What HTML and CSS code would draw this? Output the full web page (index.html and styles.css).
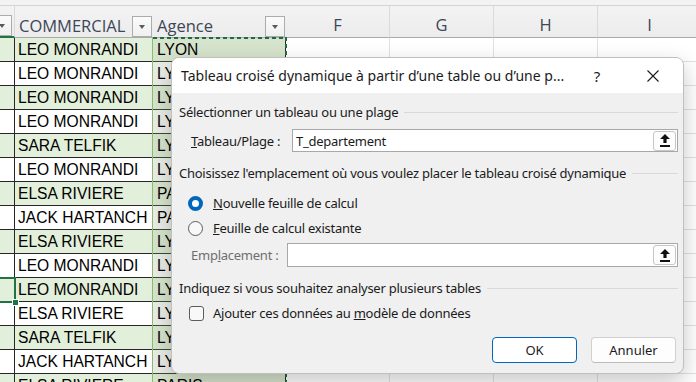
FILE: index.html
```
<!DOCTYPE html>
<html lang="fr">
<head>
    <meta charset="UTF-8">
    <title>Tableau croisé dynamique</title>
    <link rel="stylesheet" href="styles.css">
</head>
<body>
    <div class="topbar"></div>

    <div class="sheet">
        <!-- en-tetes -->
        <div class="hcell hcell-active"><span class="drop drop-cut"></span></div>
        <div class="hcell hcell-table">COMMERCIAL<span class="drop"></span></div>
        <div class="hcell hcell-table">Agence<span class="drop"></span></div>
        <div class="hcell hcell-letter">F</div>
        <div class="hcell hcell-letter">G</div>
        <div class="hcell hcell-letter">H</div>
        <div class="hcell hcell-letter">I</div>

        <div class="cell band"></div><div class="cell band">LEO MONRANDI</div><div class="cell sel band">LYON</div><div class="cell grid"></div><div class="cell grid"></div><div class="cell grid"></div><div class="cell grid"></div>
        <div class="cell"></div><div class="cell">LEO MONRANDI</div><div class="cell sel">LYON</div><div class="cell grid"></div><div class="cell grid"></div><div class="cell grid"></div><div class="cell grid"></div>
        <div class="cell band"></div><div class="cell band">LEO MONRANDI</div><div class="cell sel band">LYON</div><div class="cell grid"></div><div class="cell grid"></div><div class="cell grid"></div><div class="cell grid"></div>
        <div class="cell"></div><div class="cell">LEO MONRANDI</div><div class="cell sel">LYON</div><div class="cell grid"></div><div class="cell grid"></div><div class="cell grid"></div><div class="cell grid"></div>
        <div class="cell band"></div><div class="cell band">SARA TELFIK</div><div class="cell sel band">LYON</div><div class="cell grid"></div><div class="cell grid"></div><div class="cell grid"></div><div class="cell grid"></div>
        <div class="cell"></div><div class="cell">LEO MONRANDI</div><div class="cell sel">LYON</div><div class="cell grid"></div><div class="cell grid"></div><div class="cell grid"></div><div class="cell grid"></div>
        <div class="cell band"></div><div class="cell band">ELSA RIVIERE</div><div class="cell sel band">PARIS</div><div class="cell grid"></div><div class="cell grid"></div><div class="cell grid"></div><div class="cell grid"></div>
        <div class="cell"></div><div class="cell">JACK HARTANCH</div><div class="cell sel">PARIS</div><div class="cell grid"></div><div class="cell grid"></div><div class="cell grid"></div><div class="cell grid"></div>
        <div class="cell band"></div><div class="cell band">ELSA RIVIERE</div><div class="cell sel band">LYON</div><div class="cell grid"></div><div class="cell grid"></div><div class="cell grid"></div><div class="cell grid"></div>
        <div class="cell"></div><div class="cell">LEO MONRANDI</div><div class="cell sel">LYON</div><div class="cell grid"></div><div class="cell grid"></div><div class="cell grid"></div><div class="cell grid"></div>
        <div class="cell band"></div><div class="cell band">LEO MONRANDI</div><div class="cell sel band">LYON</div><div class="cell grid"></div><div class="cell grid"></div><div class="cell grid"></div><div class="cell grid"></div>
        <div class="cell"></div><div class="cell">ELSA RIVIERE</div><div class="cell sel">LYON</div><div class="cell grid"></div><div class="cell grid"></div><div class="cell grid"></div><div class="cell grid"></div>
        <div class="cell band"></div><div class="cell band">SARA TELFIK</div><div class="cell sel band">LYON</div><div class="cell grid"></div><div class="cell grid"></div><div class="cell grid"></div><div class="cell grid"></div>
        <div class="cell"></div><div class="cell">JACK HARTANCH</div><div class="cell sel">LYON</div><div class="cell grid"></div><div class="cell grid"></div><div class="cell grid"></div><div class="cell grid"></div>
        <div class="cell band"></div><div class="cell band">ELSA RIVIERE</div><div class="cell sel band">PARIS</div><div class="cell grid"></div><div class="cell grid"></div><div class="cell grid"></div><div class="cell grid"></div>
    </div>

    <!-- selection et cellule active -->
    <div class="marquee"></div>
    <div class="active-cell"><span class="fill-handle"></span></div>

    <div class="dialog">
        <div class="dlg-title">
            <span class="dlg-caption">Tableau croisé dynamique à partir d’une table ou d’une p...</span>
            <span class="dlg-help">?</span>
            <span class="dlg-close">
                <svg width="12" height="12" viewBox="0 0 12 12"><path d="M0.5 0.5 L11.5 11.5 M11.5 0.5 L0.5 11.5" stroke="#1b1b1b" stroke-width="1.1" fill="none"/></svg>
            </span>
        </div>
        <div class="dlg-body">
            <div class="legend legend-first">Sélectionner un tableau ou une plage</div>
            <div class="field field-range">
                <span class="field-label"><u>T</u>ableau/Plage :</span>
                <div class="ref-box">
                    <span class="ref-value">T_departement</span>
                    <span class="ref-btn">
                        <svg width="10" height="13" viewBox="0 0 10 13"><path d="M5 0 L10 5 L6.6 5 L6.6 9 L3.4 9 L3.4 5 L0 5 Z" fill="#111"/><rect x="0" y="11" width="10" height="2" fill="#111"/></svg>
                    </span>
                </div>
            </div>

            <div class="legend">Choisissez l'emplacement où vous voulez placer le tableau croisé dynamique</div>
            <div class="option option-first"><span class="radio radio-on"></span><span><u>N</u>ouvelle feuille de calcul</span></div>
            <div class="option"><span class="radio"></span><span><u>F</u>euille de calcul existante</span></div>
            <div class="field field-dest">
                <span class="field-label field-label-off">Emp<u>l</u>acement :</span>
                <div class="ref-box">
                    <span class="ref-value"></span>
                    <span class="ref-btn">
                        <svg width="10" height="13" viewBox="0 0 10 13"><path d="M5 0 L10 5 L6.6 5 L6.6 9 L3.4 9 L3.4 5 L0 5 Z" fill="#111"/><rect x="0" y="11" width="10" height="2" fill="#111"/></svg>
                    </span>
                </div>
            </div>

            <div class="legend">Indiquez si vous souhaitez analyser plusieurs tables</div>
            <div class="option option-check"><span class="check"></span><span>Ajouter ces données au <u>m</u>odèle de données</span></div>

            <div class="actions">
                <button class="btn btn-primary">OK</button>
                <button class="btn">Annuler</button>
            </div>
        </div>
    </div>
</body>
</html>
```

FILE: styles.css
```
body {
    margin: 0;
    width: 696px;
    height: 382px;
    overflow: hidden;
    position: relative;
    background: #ffffff;
    font-family: "Liberation Sans", Arial, sans-serif;
}

.topbar {
    height: 5px;
    background: #f3f3f3;
    border-bottom: 1px solid #d4d4d4;
}

.sheet {
    display: grid;
    grid-template-columns: 15px 138px 133px 104px 104px 104px 104px;
    grid-template-rows: 32px;
    grid-auto-rows: 24px;
    width: 702px;
}

/* en-tetes de colonnes */
.hcell {
    box-sizing: border-box;
    display: flex;
    align-items: flex-end;
    background: linear-gradient(#f3f3f3, #ececec);
    border-bottom: 1px solid #a9a9a9;
    border-right: 1px solid #dadada;
    font-family: "Open Sans", "Noto Sans", sans-serif;
    font-size: 16.5px;
    line-height: 22px;
    color: #3d4757;
    padding-bottom: 1px;
    overflow: hidden;
}
.hcell-active {
    border-bottom: 2px solid #217346;
    padding-bottom: 0;
}
.hcell-table {
    padding-left: 4px;
    padding-bottom: 0;
    border-right: none;
    line-height: 22px;
}
.hcell-letter {
    justify-content: center;
}
.drop {
    box-sizing: border-box;
    flex: none;
    width: 20px;
    height: 21px;
    margin-left: auto;
    margin-right: 1px;
    background: linear-gradient(#fbfbfb, #f0f0f0);
    border: 1px solid #acacac;
    position: relative;
}
.drop::after {
    content: "";
    position: absolute;
    left: 6px;
    top: 8px;
    border-left: 3.5px solid transparent;
    border-right: 3.5px solid transparent;
    border-top: 4px solid #5a5a5a;
}
.drop-cut {
    margin-left: -8px;
    margin-right: 2px;
}

/* cellules */
.cell {
    box-sizing: border-box;
    border-bottom: 1px solid #262626;
    border-right: 1px solid #262626;
    font-size: 15.6px;
    line-height: 23px;
    padding-left: 3px;
    color: #000;
    white-space: nowrap;
    overflow: hidden;
}
.band {
    background: #e2efda;
}
.sel {
    background: #e9ede6;
    padding-left: 4px;
    border-bottom-color: #3c4a35;
}
.sel.band {
    background: #d7e4cd;
}
.grid {
    border-bottom-color: #e1e1e1;
    border-right-color: #e1e1e1;
}

/* marquee de copie */
.marquee {
    position: absolute;
    left: 152px;
    top: 37px;
    width: 134px;
    height: 360px;
    border-left: 1px solid #8dbb72;
    background:
        repeating-linear-gradient(90deg, #1e6b3f 0 4px, transparent 4px 7px) top left / 100% 2px no-repeat,
        repeating-linear-gradient(180deg, #1e6b3f 0 4px, transparent 4px 7px) top right / 2px 100% no-repeat;
}

.active-cell {
    position: absolute;
    left: -3px;
    top: 277px;
    width: 15px;
    height: 22px;
    border: 2px solid #217346;
}
.fill-handle {
    position: absolute;
    right: -5px;
    bottom: -5px;
    width: 5px;
    height: 5px;
    background: #217346;
    border: 1px solid #ffffff;
}

/* boite de dialogue */
.dialog {
    position: absolute;
    left: 171px;
    top: 57px;
    width: 513px;
    height: 317px;
    box-sizing: border-box;
    border: 1px solid #bfbfbf;
    border-radius: 8px;
    background: #f0f0f0;
    box-shadow: 0 8px 22px rgba(0, 0, 0, 0.22);
    overflow: hidden;
    font-family: "Noto Sans", "Open Sans", sans-serif;
    color: #1b1b1b;
}
.dlg-title {
    height: 35px;
    background: #ffffff;
    display: flex;
    align-items: center;
    padding-left: 9px;
}
.dlg-caption {
    font-size: 14px;
    flex: 1;
    white-space: nowrap;
}
.dlg-help {
    font-size: 15px;
    width: 20px;
    text-align: center;
    margin-right: 40px;
}
.dlg-close {
    display: flex;
    width: 12px;
    margin-right: 24px;
}

.dlg-body {
    padding: 0 5px 0 7px;
    font-size: 13px;
    letter-spacing: -0.25px;
}
.legend {
    display: flex;
    align-items: center;
    height: 20px;
    margin-top: 11px;
    white-space: nowrap;
}
.legend::after {
    content: "";
    flex: 1;
    height: 1px;
    background: #d9d9d9;
    margin-left: 6px;
}
.legend-first {
    margin-top: 9px;
}

.field {
    display: flex;
    align-items: center;
    padding-left: 12px;
}
.field-range {
    height: 23px;
    margin-top: 7px;
}
.field-dest {
    height: 24px;
    margin-top: 5px;
}
.field-label {
    flex: none;
    width: 101px;
}
.field-dest .field-label {
    width: 96px;
}
.field-label-off {
    color: #6e6e6e;
}
.ref-box {
    flex: 1;
    align-self: stretch;
    box-sizing: border-box;
    display: flex;
    align-items: center;
    background: #ffffff;
    border: 1px solid #a8a8a8;
    padding: 0 1px 0 3px;
}
.ref-value {
    flex: 1;
}
.ref-btn {
    box-sizing: border-box;
    width: 23px;
    height: 20px;
    display: flex;
    align-items: center;
    justify-content: center;
    border: 1px solid #c6c6c6;
    border-radius: 3px;
    background: #fdfdfd;
}

.option {
    display: flex;
    align-items: center;
    height: 20px;
    margin-top: 5px;
    padding-left: 9px;
}
.option-first {
    margin-top: 10px;
}
.radio {
    box-sizing: border-box;
    width: 15px;
    height: 15px;
    border-radius: 50%;
    border: 1px solid #5c5c5c;
    background: #f8f8f8;
    margin-right: 10px;
}
.radio-on {
    border: 4px solid #0067c0;
    background: #ffffff;
}
.option-check {
    padding-left: 10px;
}
.check {
    box-sizing: border-box;
    width: 15px;
    height: 15px;
    border-radius: 3px;
    border: 1px solid #5c5c5c;
    background: #f8f8f8;
    margin-right: 9px;
}

.actions {
    display: flex;
    justify-content: flex-end;
    gap: 14px;
    margin-top: 14px;
    padding-right: 2px;
}
.btn {
    width: 85px;
    height: 26px;
    box-sizing: border-box;
    border: 1px solid #d0d0d0;
    border-bottom-color: #bcbcbc;
    border-radius: 4px;
    background: #fdfdfd;
    font-family: "Noto Sans", "Open Sans", sans-serif;
    font-size: 13px;
    color: #1b1b1b;
    padding: 0;
}
.btn-primary {
    border: 1px solid #0067c0;
    background: #ffffff;
}
```
